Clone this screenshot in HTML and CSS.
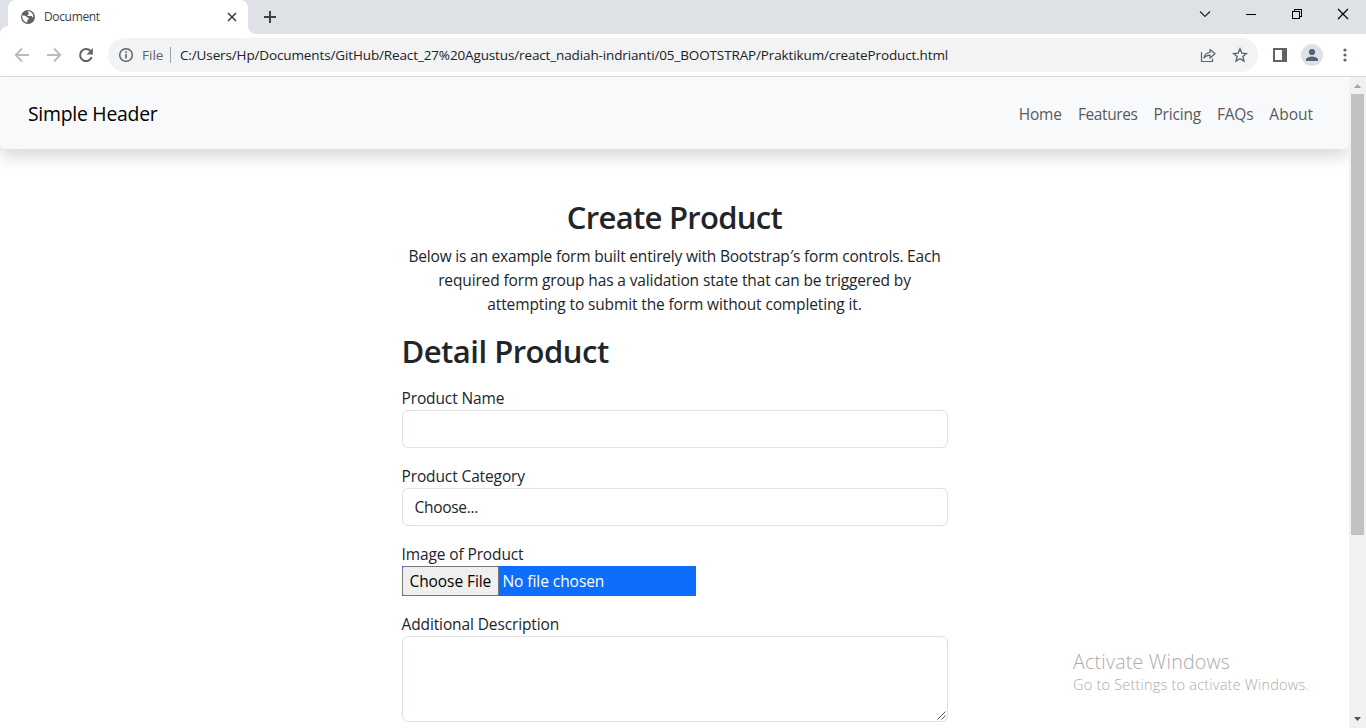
FILE: index.html
```html
<!DOCTYPE html>
<html lang="en">
<head>
<meta charset="utf-8">
<title>Document</title>
<link rel="stylesheet" href="styles.css">
</head>
<body>
<div class="window">
  <div class="tabstrip">
    <div class="tab">
      <svg class="favicon" width="16" height="16" viewBox="0 0 16 16"><circle cx="8" cy="8" r="7" fill="#5f6368"/><path d="M2.2 6.6C4 6.4 6 6.8 7.2 8.2c.6.8 1.600.4 1.600 1.400 0 .9-1.300.9-1.500 1.900-.1.800.4 1.300-.1 1.900C4.100 13.200 1.900 10 2.200 6.600z" fill="#fff"/><path d="M7.300 2.300c1 .2.400 1.500 1.300 1.700.9.200.3 1.300-.4 1.500-.9.200-1 1.300-.1 1.500 1.500.3 2.200-.4 3.300.1.900.4.900 1.400 1.900 1.300.4-2.700-1.600-5.800-4.900-6.100z" fill="#fff"/></svg>
      <span class="tab-title">Document</span>
      <svg class="tab-close" width="10" height="10" viewBox="0 0 10 10"><path d="M1 1l8 8M9 1L1 9" stroke="#3c4043" stroke-width="1.600"/></svg>
    </div>
    <svg class="flare" width="8" height="8" viewBox="0 0 8 8"><path d="M0 0a8 8 0 0 0 8 8H0z" fill="#fff"/></svg>
    <svg class="newtab" width="14" height="14" viewBox="0 0 14 14"><path d="M7 1v12M1 7h12" stroke="#3c4043" stroke-width="2"/></svg>
    <div class="caption">
      <svg width="12" height="12" viewBox="0 0 12 12"><path d="M1 3.500l5 5 5-5" fill="none" stroke="#222" stroke-width="1.100"/></svg>
      <svg width="12" height="12" viewBox="0 0 12 12"><path d="M1 6.500h10" stroke="#000"/></svg>
      <svg width="12" height="12" viewBox="0 0 12 12" shape-rendering="crispEdges"><path d="M1.500 3.500h7v7h-7zM3.500 3V1.500h7v7H9" fill="none" stroke="#000"/></svg>
      <svg width="12" height="12" viewBox="0 0 12 12"><path d="M1 1l10 10M11 1L1 11" stroke="#000" stroke-width="1.200"/></svg>
    </div>
  </div>
  <div class="toolbar">
    <div class="nav-buttons">
      <svg width="16" height="16" viewBox="0 0 16 16"><path d="M15 8H2M8 1.500L1.700 8 8 14.500" fill="none" stroke="#babcbe" stroke-width="1.900"/></svg>
      <svg width="16" height="16" viewBox="0 0 16 16"><path d="M1 8h13M8 1.500L14.300 8 8 14.500" fill="none" stroke="#babcbe" stroke-width="1.900"/></svg>
      <svg width="16" height="16" viewBox="0 0 16 16"><path d="M13.700 10.200A6 6 0 1 1 12.500 4" fill="none" stroke="#5f6368" stroke-width="2"/><path d="M14.900 1v6.400H8.500z" fill="#5f6368"/></svg>
    </div>
    <div class="omnibox">
      <svg width="16" height="16" viewBox="0 0 16 16"><circle cx="8" cy="8" r="6.300" fill="none" stroke="#5f6368" stroke-width="1.500"/><path d="M8 7v4.500M8 4.300v1.600" stroke="#5f6368" stroke-width="1.600"/></svg>
      <span class="scheme">File</span>
      <span class="url">C:/Users/Hp/Documents/GitHub/React_27%20Agustus/react_nadiah-indrianti/05_BOOTSTRAP/Praktikum/createProduct.html</span>
      <svg width="16" height="16" viewBox="0 0 16 16"><path d="M1.500 5v9.500h11v-3" fill="none" stroke="#5f6368" stroke-width="1.200"/><path d="M4 11c.4-3.600 2.400-5.300 6-5.500V2.500l5 4.300-5 4.200V8.200C7.300 8.200 5.600 9 4 11z" fill="none" stroke="#5f6368" stroke-width="1.200" stroke-linejoin="round"/></svg>
      <svg class="star" width="16" height="16" viewBox="0 0 16 16"><path d="M8 1.800l1.800 4.300 4.600.4-3.500 3.100 1 4.500L8 11.700l-3.900 2.400 1-4.500L1.600 6.500l4.600-.4z" fill="none" stroke="#5f6368" stroke-width="1.400"/></svg>
    </div>
    <svg class="panel" width="14" height="14" viewBox="0 0 14 14"><path d="M0 0h14v14H0zM2 2v10h7V2z" fill="#5f6368" fill-rule="evenodd"/></svg>
    <svg class="avatar" width="22" height="22" viewBox="0 0 22 22"><circle cx="11" cy="11" r="11" fill="#dee1e6"/><circle cx="11" cy="8" r="3.100" fill="#56617a"/><path d="M5 17v-1.500c0-2 4-3 6-3s6 1 6 3V17z" fill="#56617a"/></svg>
    <svg class="kebab" width="4" height="14" viewBox="0 0 4 14"><g fill="#5f6368"><circle cx="2" cy="2" r="1.600"/><circle cx="2" cy="7" r="1.600"/><circle cx="2" cy="12" r="1.600"/></g></svg>
  </div>
  <div class="viewport">
    <div class="page">
      <header class="site-header">
        <a class="brand">Simple Header</a>
        <nav class="site-nav">
          <a class="home">Home</a><a class="features">Features</a><a class="pricing">Pricing</a><a class="faqs">FAQs</a><a class="about">About</a>
        </nav>
      </header>
      <main class="content">
        <div class="intro">
          <h2 class="title">Create Product</h2>
          <p class="lead"><span class="l1">Below is an example form built entirely with Bootstrap′s form controls. Each</span><br><span class="l2">required form group has a validation state that can be triggered by</span><br><span class="l3">attempting to submit the form without completing it.</span></p>
        </div>
        <h2 class="subtitle">Detail Product</h2>
        <div class="field"><label>Product Name</label><div class="control"></div></div>
        <div class="field"><label>Product Category</label><div class="control"><span class="choose">Choose...</span></div></div>
        <div class="field"><label>Image of Product</label><div class="file"><span class="file-button">Choose File</span><span class="file-name">No file chosen</span></div></div>
        <div class="field"><label>Additional Description</label><div class="control area"><svg width="9" height="9" viewBox="0 0 9 9"><path d="M.5 8.500l8-8M4.500 8.500l4-4" stroke="#444" stroke-width=".9"/></svg></div></div>
      </main>
    </div>
    <div class="scrollbar">
      <svg width="17" height="17" viewBox="0 0 17 17"><path d="M5 11l3.500-4 3.500 4z" fill="#a3a3a3"/></svg>
      <div class="thumb"></div>
      <svg class="down" width="17" height="17" viewBox="0 0 17 17"><path d="M5 6h7l-3.500 4z" fill="#505050"/></svg>
    </div>
  </div>
  <div class="watermark"><div class="wm-title">Activate Windows</div><div class="wm-text">Go to Settings to activate Windows.</div></div>
</div>
</body>
</html>
```

FILE: styles.css
```css
* { box-sizing: border-box; }
body { margin: 0; overflow: hidden; background: #fff; color: #212529; font: 400 15.5px/24px "Open Sans", "Noto Sans", sans-serif; white-space: nowrap; }
svg { display: block; flex: none; }
.window { position: relative; display: flex; flex-direction: column; width: 1366px; height: 728px; overflow: hidden; }
.tabstrip { display: flex; align-items: flex-start; height: 34px; background: #dee1e6; padding-left: 8px; }
.tab { display: flex; align-items: center; width: 240px; height: 34px; padding: 0 11px 0 12px; background: #fff; border-radius: 8px 8px 0 0; box-shadow: -8px 26px 0 0 #fff; }
.favicon { margin-right: 8px; }
.tab-title { flex: 1; font-size: 12px; letter-spacing: -.35px; color: #3c4043; }
.flare { margin-top: 26px; }
.newtab { margin: 10px 0 0 7px; }
.caption { display: flex; gap: 34px; margin: 8px 17px 0 auto; }
.toolbar { display: flex; align-items: center; height: 43px; flex: none; padding: 0 19px 1px 14px; background: #fff; border-bottom: 1px solid #d9dbde; position: relative; }
.nav-buttons { display: flex; gap: 16px; }
.omnibox { display: flex; align-items: center; width: 1150px; height: 34px; margin-left: 14px; padding: 0 10px; border-radius: 17px; background: #f1f3f4; font-size: 13.5px; }
.scheme { width: 29px; height: 16px; line-height: 16px; margin: 0 9px 0 8px; border-right: 1px solid #9aa0a6; color: #5f6368; }
.url { flex: 1; color: #202124; letter-spacing: -.13px; }
.star { margin-left: 16px; }
.panel { margin-left: 15px; }
.avatar { margin-left: 14px; }
.kebab { margin-left: 20px; }
.viewport { display: flex; flex: 1; min-height: 0; }
.page { width: 1349px; overflow: hidden; }
.site-header { display: flex; align-items: center; height: 72px; padding: 2px 36px 0 28px; border-radius: 6px; background: #f8f9fa; box-shadow: 0 8px 16px rgba(0,0,0,.15); }
.brand { font-size: 19.4px; letter-spacing: -.26px; color: #000; }
.site-nav { display: flex; margin-left: auto; gap: 16px; color: #595a5b; }
.home { letter-spacing: -.15px; }
.features { letter-spacing: -.4px; }
.pricing, .faqs { letter-spacing: -.2px; }
.content { width: 546px; margin: 49px auto 0; }
.intro { text-align: center; }
h2 { margin: 0; font-size: 31px; line-height: 38px; font-weight: 600; letter-spacing: -.7px; }
.intro h2 { margin: 1px 0 8px; }
p { margin: 0; }
.lead { margin: 0 0 16px; letter-spacing: -.13px; }
.l1 { letter-spacing: -.2px; }
.subtitle { margin-bottom: 16px; letter-spacing: -.5px; }
.field { margin-bottom: 16px; }
label { display: block; letter-spacing: -.12px; }
.control { height: 38px; padding: 6px 12px; border: 1px solid #dee2e6; border-radius: 6px; }
.choose { letter-spacing: -.3px; }
.area { display: flex; justify-content: flex-end; align-items: flex-end; height: 86px; padding: 0 1px 1px 0; }
.file { display: flex; width: 294px; height: 30px; background: #0d6efd; color: #fff; line-height: 30px; }
.file-name { letter-spacing: -.06px; }
.file-button { width: 97px; padding-left: 7px; margin-right: 4px; border: 1px solid #767676; border-radius: 2px; background: #efefef; color: #000; line-height: 28px; letter-spacing: -.08px; }
.scrollbar { display: flex; flex-direction: column; align-items: center; width: 17px; background: #f1f1f1; }
.thumb { width: 13px; height: 441px; background: #c1c1c1; }
.down { margin-top: auto; }
.watermark { position: absolute; left: 1073px; top: 650px; color: #acacac; font-weight: 300; }
.wm-title { font-size: 19.5px; line-height: 24px; letter-spacing: .26px; }
.wm-text { font-size: 14.5px; line-height: 22px; letter-spacing: .21px; }
```
